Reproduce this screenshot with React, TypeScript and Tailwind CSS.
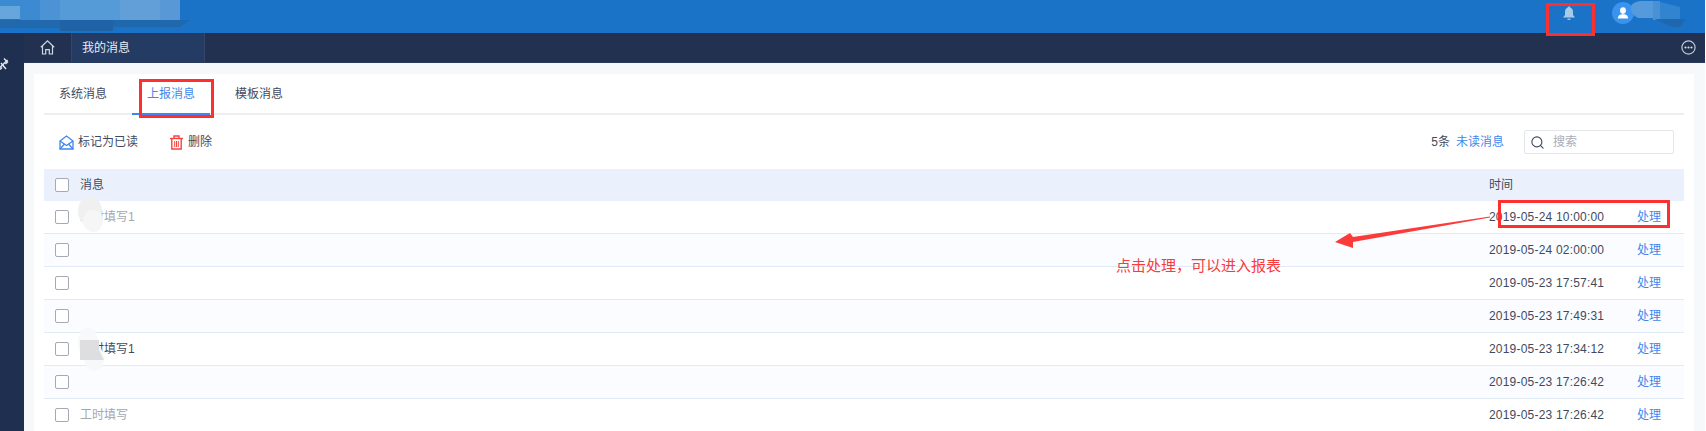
import { Search } from "lucide-react";

const FONT = "font-['Liberation_Sans','Noto_Sans_CJK_SC',sans-serif]";

const rows = [
  { text: "工时填写1", time: "2019-05-24 10:00:00", read: true },
  { text: "", time: "2019-05-24 02:00:00", read: true },
  { text: "", time: "2019-05-23 17:57:41", read: true },
  { text: "", time: "2019-05-23 17:49:31", read: true },
  { text: "工时填写1", time: "2019-05-23 17:34:12", read: false },
  { text: "", time: "2019-05-23 17:26:42", read: true },
  { text: "工时填写", time: "2019-05-23 17:26:42", read: true },
];

function Box() {
  return <span className="block w-[14px] h-[14px] shrink-0 rounded-[2px] border border-[#a4a9b3] bg-white" />;
}

function RedBox({ className }: { className: string }) {
  return <div className={`absolute border-[3px] border-[#fb3030] ${className}`} />;
}

export default function App() {
  return (
    <div className="w-[1706px] h-[431px] overflow-hidden bg-white">
      <div className={`relative w-[1705px] h-[431px] text-[12px] text-[#3f4a60] ${FONT}`}>
        <header className="h-[33px] bg-[#1a73c7] flex items-start justify-end pr-[71px]">
          <svg className="mt-[6px] mr-[36px]" width="14" height="14" viewBox="0 0 14 14">
            <path d="M7 0.5C8 0.5 8.4 1.2 8.5 1.8C10.6 2.5 11 4.5 11 6.5V9L13 11.5H1L3 9V6.5C3 4.5 3.4 2.5 5.5 1.8C5.6 1.2 6 0.5 7 0.5Z" fill="#a9cbea" />
            <path d="M5.5 12.7H8.5V13.6H5.5Z" fill="#e8f1fa" />
          </svg>
          <div className="mt-[2px] w-[22px] h-[22px] rounded-full bg-[#3a93ee] flex items-center justify-center">
            <svg width="12" height="12" viewBox="0 0 12 12">
              <ellipse cx="6" cy="3.6" rx="2.9" ry="3.3" fill="#ffffff" />
              <path d="M0.8 11.5C0.8 9 2.5 7.6 4.5 7.2H7.5C9.5 7.6 11.2 9 11.2 11.5Z" fill="#ffffff" />
            </svg>
          </div>
        </header>

        <div className="flex h-[398px]">
          <aside className="w-[24px] shrink-0 bg-[#1f2f4f] overflow-hidden pt-[24px]">
            <svg width="9" height="14" viewBox="0 0 9 14" fill="none" stroke="#e6eaf1" strokeWidth="1.4">
              <path d="M0 10.5L7.5 3" />
              <path d="M4 1.5L7.5 5L5.5 7" />
              <path d="M1 6L6 12" />
              <path d="M0 12.5L2 10.5" />
            </svg>
          </aside>

          <div className="flex-1 min-w-0 flex flex-col">
            <nav className="h-[30px] shrink-0 bg-[#22314f] flex items-stretch border-b border-[#2b3b5a]">
              <div className="w-[48px] flex items-center justify-center border-r border-[#34476a]">
                <svg width="15" height="15" viewBox="0 0 15 15" fill="none" stroke="#cfd8e4" strokeWidth="1.2">
                  <path d="M0.8 7.2L7.5 0.9L14.2 7.2" />
                  <path d="M2.5 6V14H5.7V9.6H9.3V14H12.5V6" />
                </svg>
              </div>
              <div className="w-[133px] bg-[#243b63] border-r border-[#34476a] pl-[10px] flex items-center text-[#e8edf5]">我的消息</div>
              <div className="flex-1 flex items-center justify-end pr-[9px]">
                <svg width="15" height="15" viewBox="0 0 15 15">
                  <circle cx="7.5" cy="7.5" r="6.6" fill="none" stroke="#c3cad6" strokeWidth="1.2" />
                  <circle cx="4.5" cy="7.5" r="1.1" fill="#d5dae3" />
                  <circle cx="7.5" cy="7.5" r="1.1" fill="#d5dae3" />
                  <circle cx="10.5" cy="7.5" r="1.1" fill="#d5dae3" />
                </svg>
              </div>
            </nav>

            <main className="flex-1 min-h-0 bg-[#f7f8fa] pt-[11px] pl-[10px] pr-[11px]">
              <section className="h-full bg-white px-[10px]">
                <div className="h-[41px] flex items-stretch gap-[10px] border-b-2 border-[#eceef1]">
                  <div className="w-[78px] flex items-center justify-center">系统消息</div>
                  <div className="w-[78px] h-[41px] flex items-center justify-center text-[#3f86ee] border-b-2 border-[#3f86ee]">上报消息</div>
                  <div className="w-[78px] flex items-center justify-center">模板消息</div>
                </div>

                <div className="h-[54px] flex items-center pl-[15px] pr-[10px]">
                  <svg width="15" height="15" viewBox="0 0 15 15" fill="none" stroke="#3f86ee" strokeWidth="1.3">
                    <path d="M1 6L7.5 1L14 6V14H1Z" />
                    <path d="M1 6L7.5 10.5L14 6" />
                    <path d="M1 14L5.5 9M14 14L9.5 9" />
                  </svg>
                  <span className="ml-[4px]">标记为已读</span>
                  <svg className="ml-[31px]" width="15" height="15" viewBox="0 0 15 15" fill="none" stroke="#f5443f" strokeWidth="1.4">
                    <path d="M1 3.5H14" />
                    <path d="M5 3V1H10V3" />
                    <path d="M2.8 3.5V14H12.2V3.5" />
                    <path d="M5.7 6V12M7.5 6V12M9.3 6V12" strokeWidth="1" />
                  </svg>
                  <span className="ml-[4px]">删除</span>
                  <span className="ml-auto">5条</span>
                  <span className="ml-[6px] text-[#3f86ee]">未读消息</span>
                  <div className="ml-[20px] w-[150px] h-[24px] rounded-[2px] border border-[#e4e6ea] flex items-center pl-[5px]">
                    <Search className="w-[15px] h-[15px] text-[#3f4a60]" strokeWidth={1.8} />
                    <span className="ml-[8px] text-[#a8adb6]">搜索</span>
                  </div>
                </div>

                <div className="h-[32px] bg-[#eaf1fd] flex items-center pl-[11px]">
                  <Box />
                  <span className="ml-[11px]">消息</span>
                  <span className="ml-auto w-[195px]">时间</span>
                </div>

                {rows.map((r, i) => (
                  <div key={i} className={`h-[33px] flex items-center pl-[11px] border-b border-[#e0ebf6] ${i % 2 ? "bg-[#fbfcff]" : "bg-white"}`}>
                    <Box />
                    <span className={`ml-[11px] ${r.read ? "text-[#a3a7b0]" : "text-[#3f4a60]"}`}>{r.text}</span>
                    <span className="ml-auto w-[148px] tracking-[0.2px]">{r.time}</span>
                    <span className="w-[47px] text-[#3f86ee]">处理</span>
                  </div>
                ))}
              </section>
            </main>
          </div>
        </div>

        {/* privacy smudges over the header and rows */}
        <svg className="absolute left-0 top-0 pointer-events-none" width="1705" height="431" viewBox="0 0 1705 431">
          <path d="M0 0H20V6H0Z" fill="#3b8bd3" />
          <path d="M0 6H20V19H0Z" fill="#67a6dc" />
          <path d="M20 0H40V20H20Z" fill="#3c8ad2" />
          <path d="M40 0H60V20H40Z" fill="#4b93d5" />
          <path d="M60 0H120V20H60Z" fill="#559bd8" />
          <path d="M120 0H160V20H120Z" fill="#629fd9" />
          <path d="M160 0H180V20H160Z" fill="#5898d6" />
          <path d="M0 20H60V28H0Z" fill="#2168ac" />
          <path d="M60 20H113V31H60Z" fill="#1f63a6" />
          <path d="M113 20H190L180 27H113Z" fill="#1f68ae" />
          <path d="M1631 6Q1633 2 1640 1H1653V18H1638Q1630 14 1631 6Z" fill="#559ada" />
          <path d="M1653 1H1660V20H1653Z" fill="#4a90d2" />
          <path d="M1660 2L1680 7V19H1660Z" fill="#3084d0" />
          <path d="M1655 19H1686L1680 27H1672Z" fill="#1f68ae" />
          <ellipse cx="90" cy="211" rx="12" ry="15" fill="#f0f0f1" />
          <ellipse cx="93" cy="221" rx="10" ry="11" fill="#f6f6f7" />
          <ellipse cx="88" cy="343" rx="10" ry="16" fill="#f7f8f9" />
          <ellipse cx="94" cy="358" rx="10" ry="13" fill="#f7f8f9" />
          <path d="M80 340H99V350L104 360H80Z" fill="#dedee0" />
          <path d="M1490 216.5L1353 237L1350 233L1335 242L1353 248L1353 242L1490 217.5Z" fill="#fb3a3a" />
        </svg>

        <RedBox className="left-[139px] top-[79px] w-[75px] h-[39px]" />
        <RedBox className="left-[1546px] top-[3px] w-[49px] h-[33px]" />
        <RedBox className="left-[1498px] top-[200px] w-[172px] h-[28px]" />
        <div className="absolute left-[1116px] top-[255px] text-[15px] leading-[20px] text-[#fb3a3a] font-['Noto_Sans_CJK_SC',sans-serif]">点击处理，可以进入报表</div>
      </div>
    </div>
  );
}
